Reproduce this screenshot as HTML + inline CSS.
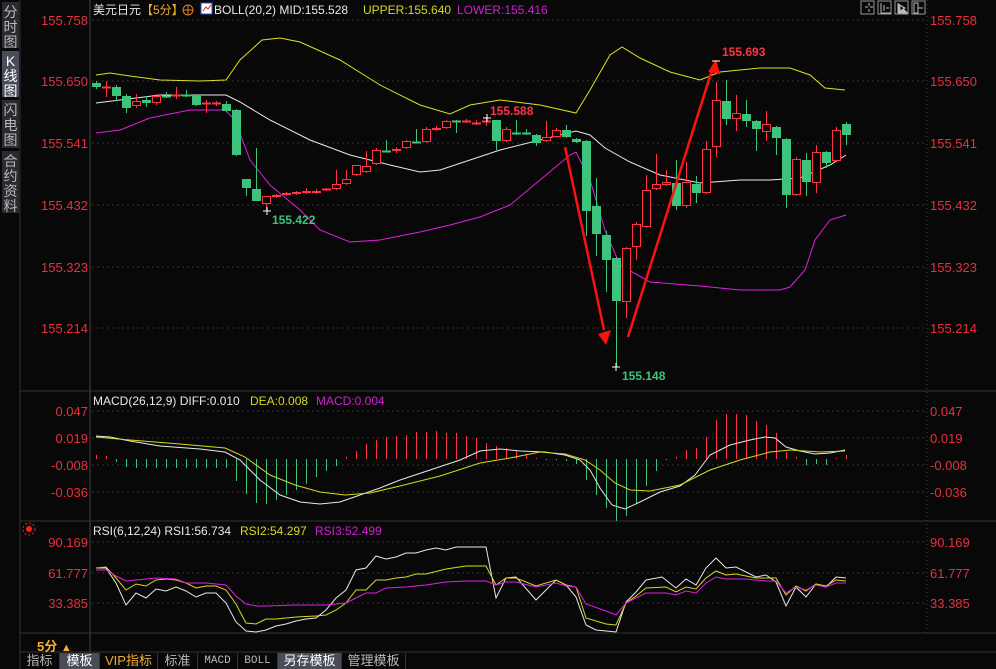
<!DOCTYPE html>
<html><head><meta charset="utf-8"><style>
*{margin:0;padding:0}
body{width:996px;height:669px;background:#080808;overflow:hidden;position:relative;font-family:"Liberation Sans","Noto Sans CJK SC",sans-serif}
svg{position:absolute;left:0;top:0}
.sb{position:absolute;left:2px;width:17px;background:#2a2b31;color:#b8b8b8;font-size:14px;line-height:15px;text-align:center;padding-top:3px;box-sizing:border-box}
.tab{position:absolute;top:653px;height:16px;font-size:13px;line-height:16px;color:#b8b8b8;text-align:center;border-right:1px solid #333;box-sizing:border-box}
</style></head><body>
<div class="sb" style="top:2px;height:46px">分<br>时<br>图</div>
<div class="sb" style="top:51px;height:46px;background:#4a4d57;color:#fff">K<br>线<br>图</div>
<div class="sb" style="top:100px;height:48px">闪<br>电<br>图</div>
<div class="sb" style="top:151px;height:62px">合<br>约<br>资<br>料</div>
<svg id="s" width="996" height="669" xmlns="http://www.w3.org/2000/svg" font-family="Liberation Sans, Noto Sans CJK SC, sans-serif"></svg>
<div class="tab" style="left:20px;width:40px">指标</div>
<div class="tab" style="left:60px;width:40px;background:#4a4d57;color:#fff">模板</div>
<div class="tab" style="left:100px;width:58px;color:#f0b030">VIP指标</div>
<div class="tab" style="left:158px;width:40px">标准</div>
<div class="tab" style="left:198px;width:40px;font-size:11px;font-family:'Liberation Mono',monospace">MACD</div>
<div class="tab" style="left:238px;width:40px;font-size:11px;font-family:'Liberation Mono',monospace">BOLL</div>
<div class="tab" style="left:278px;width:64px;background:#4a4d57;color:#fff">另存模板</div>
<div class="tab" style="left:342px;width:64px">管理模板</div>
<div style="position:absolute;left:37px;top:636px;color:#f0b030;font-size:13px;font-weight:bold">5分 <span style="font-size:11px">▲</span></div>
<script>
var S='';
function L(x1,y1,x2,y2,c,w,d){S+='<line x1="'+x1+'" y1="'+y1+'" x2="'+x2+'" y2="'+y2+'" stroke="'+c+'" stroke-width="'+(w||1)+'"'+(d?' stroke-dasharray="'+d+'"':'')+'/>';}
function T(x,y,t,c,sz,a,fw){S+='<text x="'+x+'" y="'+y+'" fill="'+c+'" font-size="'+(sz||12)+'"'+(a?' text-anchor="'+a+'"':'')+(fw?' font-weight="bold"':'')+'>'+t+'</text>';}
function P(pts,c,w){S+='<polyline fill="none" stroke="'+c+'" stroke-width="'+(w||1)+'" points="'+pts.map(function(p){return p.join(',')}).join(' ')+'"/>';}
L(20,0,20,669,'#333');L(90,0,90,652,'#444');L(927,0,927,633,'#444',1,'1,3');
L(20,391,996,391,'#333');L(20,521,996,521,'#333');L(20,633,996,633,'#333');L(20,652,996,652,'#333');
var R='#e8303c';
[[20,'155.758'],[81,'155.650'],[143,'155.541'],[205,'155.432'],[267,'155.323'],[328,'155.214']].forEach(function(a){L(92,a[0],925,a[0],'#333',1,'2,3');T(88,a[0]+5,a[1],R,13,'end');T(930,a[0]+5,a[1],R,13);});
[[411,'0.047'],[438,'0.019'],[465,'-0.008'],[492,'-0.036']].forEach(function(a){L(92,a[0],925,a[0],'#333',1,'2,3');T(88,a[0]+5,a[1],R,13,'end');T(930,a[0]+5,a[1],R,13);});
[[542,'90.169'],[573,'61.777'],[603,'33.385']].forEach(function(a){L(92,a[0],925,a[0],'#333',1,'2,3');T(88,a[0]+5,a[1],R,13,'end');T(930,a[0]+5,a[1],R,13);});
P([[96,75],[110,73],[130,76],[160,80],[200,81],[226,80],[240,60],[262,40],[280,38],[300,42],[340,60],[380,85],[420,105],[450,114],[470,105],[500,100],[540,105],[576,113],[590,90],[610,55],[622,47],[640,58],[670,72],[700,80],[720,72],[760,68],[790,68],[810,75],[825,88],[845,90]],'#e0e020');
P([[96,103],[120,100],[160,95],[226,95],[240,102],[270,120],[310,140],[350,155],[390,165],[420,172],[440,170],[470,160],[500,150],[540,140],[576,131],[590,135],[605,148],[630,162],[660,175],[700,183],[740,180],[770,180],[800,178],[830,165],[846,155]],'#e8e8e8');
P([[96,133],[120,130],[150,118],[190,110],[225,110],[235,120],[250,160],[270,185],[300,210],[320,230],[350,242],[380,240],[420,232],[450,225],[480,217],[510,205],[540,180],[570,155],[576,152],[590,180],[605,230],[620,265],[650,282],[700,286],[740,290],[780,290],[790,287],[805,270],[815,240],[830,220],[846,215]],'#e020e0');
var C=[[83,87,81,89],[87,87,81,97],[87,96,85,101],[96,108,94,113],[106,101,94,108],[100,103,96,107],[103,96,94,105],[96,96,92,98],[95,95,87,99],[95,95,90,97],[95,105,94,106],[103,103,100,113],[103,103,101,106],[104,111,101,112],[110,155,109,156],[179,188,179,196],[189,201,148,201],[204,196,196,210],[197,195,194,198],[195,193,192,196],[194,192,191,195],[193,191,188,194],[193,191,189,194],[190,189,188,191],[189,184,170,190],[184,179,170,185],[175,165,165,176],[172,166,151,173],[164,150,148,165],[151,151,140,152],[151,149,147,153],[148,141,140,149],[142,142,129,143],[142,129,127,143],[130,128,126,131],[128,121,120,129],[121,121,120,133],[121,121,119,123],[123,123,120,125],[121,121,117,126],
[120,141,120,150],[141,129,127,142],[133,133,120,135],[133,133,129,135],[135,143,134,146],[141,137,121,142],[137,130,128,138],[130,137,125,138],[139,142,138,143],[141,211,140,236],[206,234,178,256],[235,260,231,292],[258,301,257,367],[302,248,247,318],[247,224,222,260],[227,190,175,228],[189,184,154,190],[185,182,170,186],[183,206,160,210],[206,182,162,208],[184,193,176,203],[193,149,141,194],[147,100,82,157],[101,119,80,125],[119,113,95,131],[114,121,100,127],[121,129,120,151],[132,124,111,141],[127,138,126,155],[139,195,138,208],[195,159,157,196],[160,182,153,196],[183,152,145,193],[152,163,151,168],[161,130,127,162],[124,135,122,145]];
var G='#3cc47c',RD='#ff3445';
C.forEach(function(c,i){var x=96+10*i,o=c[0],cl=c[1];var green=cl>o;if(cl==o)green=(i==7||i==9||i==29||i==32||i==36||i==42||i==43);var col=green?G:RD;
L(x+0.5,c[2],x+0.5,c[3],col);var t=Math.min(o,cl),h=Math.max(Math.abs(o-cl),1);
if(h<=1){L(x-4,t+0.5,x+5,t+0.5,col,2);}else if(green)S+='<rect x="'+(x-4)+'" y="'+t+'" width="9" height="'+h+'" fill="'+col+'"/>';else S+='<rect x="'+(x-3.5)+'" y="'+(t+0.5)+'" width="8" height="'+(h-1)+'" fill="#080808" stroke="'+col+'"/>';});
L(565,147,604,330,'#ff1010',2.5);S+='<polygon points="598,334 611,330 606,345" fill="#ff1010"/>';
L(628,337,712,70,'#ff1010',2.5);S+='<polygon points="708,72 720,74 716,59" fill="#ff1010"/>';
L(263,211,271,211,'#fff');L(267,207,267,215,'#fff');L(612,367,620,367,'#fff');L(616,363,616,371,'#fff');
L(483,118,491,118,'#fff');L(487,114,487,122,'#fff');L(712,61,720,61,'#fff');
T(490,115,'155.588',RD,12,'',1);T(272,224,'155.422',G,12,'',1);T(722,56,'155.693',RD,12,'',1);T(622,380,'155.148',G,12,'',1);
T(93,14,'美元日元','#e8e8e8',12);T(141,14,'【5分】','#f0b030',12);
S+='<circle cx="188" cy="10" r="5" fill="none" stroke="#e08020"/><line x1="183" y1="10" x2="193" y2="10" stroke="#e08020"/><line x1="188" y1="5" x2="188" y2="15" stroke="#e08020"/>';
S+='<rect x="201" y="3" width="11" height="11" fill="#fff" stroke="#3050c0"/><polyline points="203,11 206,7 208,9 211,5" fill="none" stroke="#e02020"/>';
T(214,14,'BOLL(20,2) MID:155.528','#e8e8e8',12);T(363,14,'UPPER:155.640','#d8d820',12);T(457,14,'LOWER:155.416','#d020d0',12);
[863,880,897,914].forEach(function(x){S+='<rect x="'+(x-2)+'" y="1" width="13" height="13" fill="none" stroke="#999"/>';});
S+='<path d="M865,7h3M870,7h3M869,3v3M869,9v3" stroke="#bbb"/><path d="M881,3v10h10M884,5v6M886,8h3" stroke="#bbb" fill="none"/><path d="M898,3v10h10M900,5l5,3l-5,3z" stroke="#bbb" fill="#bbb"/><path d="M914,3h4v10h-4zM918,8h5" stroke="#bbb" fill="none"/>';
T(93,405,'MACD(26,12,9) DIFF:0.010','#e8e8e8',12);T(250,405,'DEA:0.008','#d8d820',12);T(316,405,'MACD:0.004','#d020d0',12);
T(93,535,'RSI(6,12,24) RSI1:56.734','#e8e8e8',12);T(240,535,'RSI2:54.297','#d8d820',12);T(315,535,'RSI3:52.499','#d020d0',12);
S+='<circle cx="29" cy="529" r="3" fill="#ff2020"/><circle cx="29" cy="529" r="6" fill="none" stroke="#ff2020" stroke-dasharray="2,2"/>';
var M=[455,456,462,467,468,468,468,468,468,468,468,468,468,468,481,494,503,504,500,495,490,484,477,471,466,457,451,444,440,437,436,435,432,432,431,433,433,436,438,443,446,448,451,454,458,460,460,461,464,480,495,508,521,516,504,486,471,460,457,450,448,437,420,414,414,415,421,425,433,452,457,465,464,465,458,455];
M.forEach(function(v,i){var x=96+10*i+0.5;L(x,459,x,v,v<459?RD:G);});
P([[96,436],[110,437],[130,441],[160,446],[200,449],[225,452],[240,460],[260,480],[280,495],[300,502],[320,504],[340,502],[360,495],[380,488],[400,480],[430,470],[460,460],[480,451],[500,449],[520,451],[545,452],[565,455],[580,460],[590,470],[600,488],[612,505],[625,509],[640,502],[660,492],[680,486],[695,475],[710,455],[730,445],[750,440],[765,437],[775,438],[786,447],[800,451],[815,454],[830,453],[845,450]],'#e8e8e8');
P([[96,437],[130,440],[180,444],[225,448],[245,457],[270,475],[295,485],[320,492],[345,495],[370,493],[400,486],[440,476],[480,463],[510,458],[540,452],[565,454],[585,460],[600,470],[615,483],[630,490],[650,491],[680,485],[710,470],[740,460],[770,452],[790,450],[820,452],[845,451]],'#d8d820');
P([[96,568],[106,568],[116,583],[126,605],[136,593],[146,598],[156,589],[166,591],[176,587],[186,591],[196,597],[206,593],[216,593],[226,603],[236,622],[246,631],[256,632],[266,630],[276,626],[286,624],[296,621],[306,619],[316,618],[326,610],[336,598],[346,590],[356,570],[366,568],[376,556],[386,559],[396,557],[406,553],[416,553],[426,550],[436,548],[446,550],[456,547],[486,547],[496,598],[506,578],[516,577],[536,600],[556,580],[566,585],[576,597],[586,625],[596,630],[616,632],[626,602],[636,592],[646,580],[662,577],[676,588],[686,579],[696,585],[706,568],[716,558],[726,568],[736,567],[756,577],[766,575],[776,582],[786,606],[796,587],[806,597],[816,584],[826,587],[836,577],[846,578]],'#e8e8e8');
P([[96,568],[106,567],[116,578],[126,590],[136,584],[146,586],[156,580],[166,579],[176,580],[186,583],[196,588],[206,586],[216,586],[226,590],[236,604],[246,623],[256,624],[266,619],[276,619],[296,617],[316,616],[326,615],[336,610],[346,603],[356,590],[366,590],[376,580],[386,580],[396,578],[406,577],[416,574],[426,574],[446,569],[466,566],[486,566],[496,585],[506,578],[516,578],[536,586],[556,580],[566,585],[576,587],[586,618],[606,624],[616,625],[626,603],[636,596],[646,588],[666,587],[676,592],[686,587],[696,589],[706,578],[716,571],[726,575],[736,574],[756,578],[776,578],[786,595],[796,586],[806,591],[816,584],[826,586],[836,580],[846,581]],'#d8d820');
P([[96,570],[106,570],[116,576],[126,581],[136,580],[156,578],[176,579],[186,583],[206,583],[226,585],[236,596],[246,604],[256,606],[266,606],[296,605],[326,605],[346,603],[356,598],[366,593],[376,593],[386,588],[406,587],[426,585],[446,582],[466,581],[486,581],[496,585],[506,582],[516,582],[536,587],[556,583],[566,586],[576,587],[586,604],[606,611],[616,615],[626,603],[636,598],[646,593],[666,593],[676,595],[686,591],[696,593],[706,583],[716,577],[726,579],[746,579],[766,581],[776,581],[786,593],[796,587],[806,590],[816,585],[826,587],[836,583],[846,583]],'#e020e0');
document.getElementById('s').innerHTML=S;
</script>
</body></html>
